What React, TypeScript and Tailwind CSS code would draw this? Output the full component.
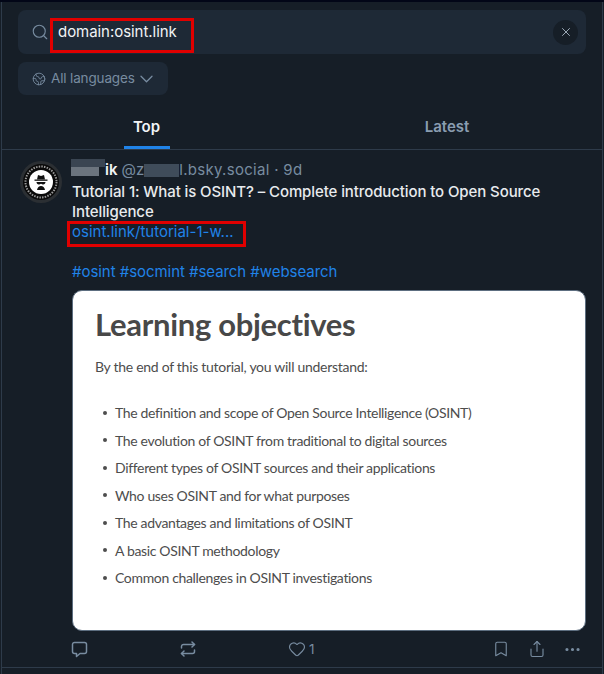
import React from 'react';
import { Search, X, Earth, Heart, Bookmark, Share, Ellipsis } from 'lucide-react';

const OBJECTIVES = [
  'The definition and scope of Open Source Intelligence (OSINT)',
  'The evolution of OSINT from traditional to digital sources',
  'Different types of OSINT sources and their applications',
  'Who uses OSINT and for what purposes',
  'The advantages and limitations of OSINT',
  'A basic OSINT methodology',
  'Common challenges in OSINT investigations',
];

const Avatar = () => (
  <svg width="42" height="42" viewBox="0 0 42 42" className="shrink-0">
    <circle cx="21" cy="21" r="21" fill="#2b2f33" />
    <circle cx="21" cy="21" r="18" fill="#0a0a0a" />
    <circle cx="21" cy="21" r="15.5" fill="none" stroke="#9a9a9a" strokeWidth="2" strokeDasharray="1.5 1.2" />
    <circle cx="21" cy="21" r="12" fill="#ffffff" />
    <path d="M14.5 18.5h13v1.3h-13z" fill="#111" />
    <path d="M17 18.5l1-4.5 3 1 3-1 1 4.5z" fill="#111" />
    <path d="M16.5 21h9c0 1.500-1 2.500-2.200 2.500-1 0-1.500-.8-2.300-.8s-1.300.8-2.300.8c-1.200 0-2.200-1-2.200-2.500z" fill="#111" />
    <path d="M17 29c.5-2.500 2-4 4-4s3.500 1.500 4 4z" fill="#111" />
  </svg>
);

const ReplyIcon = () => (
  <svg width="17" height="17" viewBox="0 0 17 17" fill="none" stroke="#788ca0" strokeWidth="1.500" strokeLinejoin="round">
    <path d="M3.500 1.500h10a2 2 0 0 1 2 2v7a2 2 0 0 1-2 2H9l-3.500 3v-3h-2a2 2 0 0 1-2-2v-7a2 2 0 0 1 2-2z" />
  </svg>
);

const RepostIcon = () => (
  <svg width="16" height="16" viewBox="0 0 16 16" fill="none" stroke="#788ca0" strokeWidth="1.500" strokeLinecap="round" strokeLinejoin="round">
    <path d="M1.500 7V5.500a2 2 0 0 1 2-2h11" />
    <path d="M12 1l2.500 2.500L12 6" />
    <path d="M14.500 9v1.500a2 2 0 0 1-2 2h-11" />
    <path d="M4 10l-2.500 2.500L4 15" />
  </svg>
);

const Chevron = () => (
  <svg width="13" height="8" viewBox="0 0 13 8" fill="none" stroke="#788ca0" strokeWidth="1.300" strokeLinecap="round" strokeLinejoin="round">
    <path d="M1 1.200l5.500 5.500L12 1.200" />
  </svg>
);

const App: React.FC = () => {
  return (
    <div className="relative h-[674px] w-[604px] overflow-hidden bg-[#161e27] font-['Inter',sans-serif]">
      <div className="h-[2px] bg-[#020617]" />
      <div className="mx-px h-[672px] border-x border-[#2e3b4a]">
        {/* search */}
        <div className="px-[16px] pt-[8px]">
          <div className="flex h-[44px] items-center rounded-[8px] bg-[#1e2936] pl-[13px] pr-[8px]">
            <Search size={18} strokeWidth={1.5} className="text-[#788ca0]" />
            <span className="ml-[9px] flex-1 text-[15px] tracking-[-0.05px] text-[#f1f3f5]">domain:osint.link</span>
            <span className="flex h-[25px] w-[25px] items-center justify-center rounded-full bg-[#161e27]">
              <X size={14} strokeWidth={1.5} className="text-[#aebbc9]" />
            </span>
          </div>
          <div className="mt-[8px] flex h-[33px] w-[150px] items-center gap-[5px] rounded-[8px] bg-[#1e2936] pl-[14px] text-[13.500px] tracking-[-0.15px] text-[#788ca0]">
            <Earth size={14} strokeWidth={1.5} />
            <span>All languages</span>
            <span><Chevron /></span>
          </div>
        </div>

        {/* tabs */}
        <div className="mt-[14px] flex h-[41px] border-b border-[#2e3b4a] text-[15px] font-semibold">
          <div className="relative flex w-[289px] justify-center pt-[7px] text-[#f1f3f5]">
            Top
            <span className="absolute bottom-0 left-[122px] h-[3px] w-[46px] bg-[#2083e8]" />
          </div>
          <div className="flex flex-1 justify-center pl-[1px] pt-[7px] text-[#8a9db1]">Latest</div>
        </div>

        {/* post */}
        <div className="flex h-[518px] gap-[10px] border-b border-[#2e3b4a] pl-[18px] pr-[15px] pt-[11px]">
          <Avatar />
          <div className="min-w-0 flex-1">
            <div className="-mt-px flex h-[20px] items-center text-[15px] text-[#788ca0]">
              <span className="-ml-px -mt-[6px] flex w-[34px] flex-col">
                <span className="h-[8px] w-[34px] bg-[#3a4552]" />
                <span className="h-[9px] w-[28px] bg-[#6b747e]" />
              </span>
              <span className="font-semibold text-[#f1f3f5]">ik</span>
              <span className="ml-[4px]">@z</span>
              <span className="h-[13px] w-[35px] bg-[#3f4c5a]" />
              <span className="tracking-[0.3px]">l.bsky.social · 9d</span>
            </div>
            <p className="mt-[2px] text-[15px] font-medium leading-[20px] tracking-[-0.1px] text-[#e8ebee]">
              Tutorial 1: What is OSINT? – Complete introduction to Open Source Intelligence
            </p>
            <p className="text-[15px] leading-[20px] text-[#2083e8]">osint.link/tutorial-1-w...</p>
            <p className="mt-[20px] text-[15px] leading-[20px] tracking-[-0.05px] text-[#2083e8]">#osint #socmint #search #websearch</p>

            <div className="mt-[8px] h-[341px] w-[514px] rounded-[10px] border border-[#5d6e80] bg-white pl-[22px] pt-[14px] font-['Lato',sans-serif] text-[#4d4d4d]">
              <h3 className="text-[31px] font-bold leading-[38px] tracking-[-0.3px] text-[#484848]">Learning objectives</h3>
              <p className="mt-[14px] text-[14px] leading-[20px] tracking-[-0.28px]">By the end of this tutorial, you will understand:</p>
              <ul className="mt-[22px]">
                {OBJECTIVES.map(item => (
                  <li key={item} className="flex h-[27.500px] items-center text-[14px] tracking-[-0.34px]">
                    <span className="ml-[8px] mr-[8px] h-[4px] w-[4px] rounded-full bg-[#4d4d4d]" />
                    {item}
                  </li>
                ))}
              </ul>
            </div>

            <div className="mt-[9px] flex h-[18px] items-center text-[#788ca0]">
              <span className="-ml-px"><ReplyIcon /></span>
              <span className="ml-[92px]"><RepostIcon /></span>
              <Heart size={18} strokeWidth={1.5} className="ml-[92px]" />
              <span className="ml-[3px] text-[13.500px]">1</span>
              <Bookmark size={18} strokeWidth={1.5} className="ml-[177px]" />
              <Share size={18} strokeWidth={1.5} className="ml-[18px]" />
              <Ellipsis size={19} strokeWidth={2} className="ml-[17px]" />
            </div>
          </div>
        </div>
      </div>

      {/* red annotation boxes */}
      <div className="absolute left-[50px] top-[18px] h-[35px] w-[144px] border-[3px] border-[#e00000]" />
      <div className="absolute left-[67px] top-[221px] h-[26px] w-[179px] border-[3px] border-[#e00000]" />
    </div>
  );
};

export default App;
